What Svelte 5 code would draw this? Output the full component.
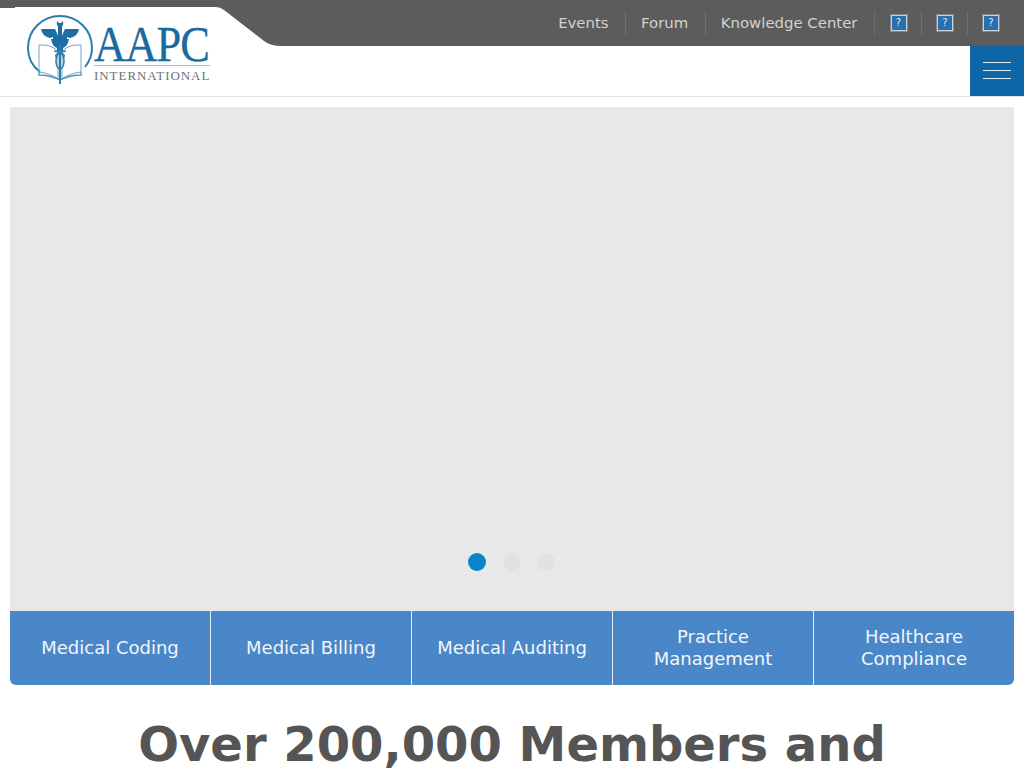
<script>
  const topLinks = ['Events', 'Forum', 'Knowledge Center'];
  const cats = ['Medical Coding', 'Medical Billing', 'Medical Auditing', 'Practice Management', 'Healthcare Compliance'];
</script>

<div class="page">
  <header class="header">
    <div class="topbar">
      <nav class="toplinks">
        {#each topLinks as l}
          <a href="#top" class="toplink">{l}</a>
        {/each}
      </nav>
      <div class="flags">
        {#each [0, 1, 2] as i}
          <span class="flag"><span class="broken">?</span></span>
        {/each}
      </div>
    </div>
    <div class="subbar">
      <button class="burger" aria-label="Menu"><i></i><i></i><i></i></button>
    </div>
    <div class="logotab">
      <svg class="tabshape" width="282" height="39" viewBox="0 0 282 39">
        <path d="M0 0H15V-1H216Q220 -1 224 2L264 33Q270 38 282 38V39H0Z" fill="#fff" />
      </svg>
      <div class="logo">
        <svg class="emblem" width="68" height="72" viewBox="0 0 68 72">
          <path d="M14 57C6 51 2 42 2 33C2 15 16 1 34 1C52 1 66 15 66 33C66 40 63 47 59 52" fill="none" stroke="#2b7dab" stroke-width="2"/>
          <path d="M13 30Q24 29 32 36V64Q24 58 13 57Z" fill="none" stroke="#6fa6c6" stroke-width="1"/>
          <path d="M55 30Q44 29 36 36V64Q44 58 55 57Z" fill="none" stroke="#6fa6c6" stroke-width="1"/>
          <path d="M13 57L13 60Q24 60 34 65Q44 60 55 60V57" fill="none" stroke="#4f93b8" stroke-width="1.3"/>
          <path d="M15 14H29Q31 18 32 21V12Q30 9 31 6L33 8H35L37 6Q38 9 36 12V21Q37 18 39 14H53Q52 21 44 23L41 22V24H27V22L24 23Q16 21 15 14Z" fill="#1c6ea4"/>
          <path d="M25 24H43Q42 31 37 33V36H31V33Q26 31 25 24Z" fill="#1c6ea4"/>
          <path d="M33 30H35V69H33Z" fill="#2b7dab"/>
          <ellipse cx="34" cy="46" rx="4" ry="8" fill="none" stroke="#2b7dab" stroke-width="1.5"/>
          <path d="M28 36Q40 38 38 42M40 36Q28 38 30 42" fill="none" stroke="#2b7dab" stroke-width="1.3"/>
        </svg>
        <div class="wordmark">
          <div class="aapc">AAPC</div>
          <div class="intl">INTERNATIONAL</div>
        </div>
      </div>
    </div>
  </header>

  <main class="content">
    <section class="slider">
      <div class="dots">
        <span class="dot active"></span>
        <span class="dot"></span>
        <span class="dot"></span>
      </div>
    </section>
    <ul class="cats">
      {#each cats as c}
        <li class="cat">{c}</li>
      {/each}
    </ul>
    <h1 class="headline">Over 200,000 Members and</h1>
  </main>
</div>

<style>
  :global(body) {
    margin: 0;
    background: #fff;
    overflow: hidden;
  }
  .page {
    height: 768px;
    overflow: hidden;
    font-family: "DejaVu Sans", sans-serif;
  }
  .header {
    position: relative;
    height: 96px;
    border-bottom: 1px solid #e4e4e4;
  }
  .topbar {
    height: 46px;
    background: #5c5c5c;
    display: flex;
    justify-content: flex-end;
    align-items: flex-start;
    padding-right: 11px;
  }
  .toplinks {
    display: flex;
    padding-top: 11px;
  }
  .toplink {
    color: #d2d2d2;
    font-size: 14.9px;
    line-height: 25px;
    height: 24px;
    padding: 0 16.5px 0 15px;
    text-decoration: none;
    border-left: 1px solid #6f6f6f;
  }
  .toplink:first-child {
    border-left: 0;
  }
  .flags {
    display: flex;
    padding-top: 11px;
  }
  .flag {
    width: 46px;
    height: 24px;
    box-sizing: border-box;
    border-left: 1px solid #6f6f6f;
    display: flex;
    justify-content: center;
    align-items: center;
    padding-left: 1px;
  }
  .flag:first-child {
    width: 47px;
  }
  .broken {
    width: 16px;
    height: 16px;
    box-sizing: border-box;
    background: #2a6fae;
    border: 1px solid #c9d3dc;
    outline: 1px solid #868686;
    color: #dfe9f2;
    font-size: 10px;
    line-height: 14px;
    text-align: center;
  }
  .subbar {
    height: 50px;
    display: flex;
    justify-content: flex-end;
  }
  .burger {
    width: 54px;
    height: 50px;
    padding: 0 0 2px;
    border: 0;
    background: #0e66a6;
    display: flex;
    flex-direction: column;
    align-items: center;
    justify-content: center;
    gap: 7px;
  }
  .burger i {
    display: block;
    width: 28px;
    height: 1px;
    background: #dff0fa;
  }
  .logotab {
    position: absolute;
    left: 0;
    top: 8px;
    width: 282px;
    height: 70px;
  }
  .tabshape {
    position: absolute;
    left: 0;
    top: 0;
    overflow: visible;
  }
  .logo {
    position: absolute;
    left: 26px;
    top: 7px;
    display: flex;
  }
  .wordmark {
    padding-top: 9px;
    width: 116px;
  }
  .aapc {
    font-family: "Liberation Serif", serif;
    font-size: 50px;
    line-height: 41px;
    letter-spacing: -1px;
    color: #1a6aa0;
    -webkit-text-stroke: 0.3px #1a6aa0;
    white-space: nowrap;
    transform: scaleX(0.89);
    transform-origin: left top;
  }
  .intl {
    font-family: "Liberation Serif", serif;
    font-size: 13px;
    line-height: 14px;
    letter-spacing: 0.95px;
    color: #6d7478;
    border-top: 1px solid #b9bcbe;
    padding-top: 3px;
    white-space: nowrap;
  }
  .content {
    padding: 10px 10px 0;
  }
  .slider {
    height: 504px;
    background: #e8e8e8;
    position: relative;
    border-radius: 2px 2px 0 0;
  }
  .dots {
    position: absolute;
    left: 458px;
    top: 446px;
    display: flex;
    gap: 16.5px;
  }
  .dot {
    width: 18px;
    height: 18px;
    border-radius: 50%;
    background: #e2e2e2;
  }
  .dot.active {
    background: #0a86c8;
  }
  .cats {
    list-style: none;
    margin: 0;
    padding: 0;
    display: grid;
    grid-template-columns: repeat(4, 201px) 1fr;
    height: 74px;
    background: #4a87c9;
    border-radius: 0 0 6px 6px;
    overflow: hidden;
  }
  .cat {
    display: flex;
    align-items: center;
    justify-content: center;
    text-align: center;
    color: #f2f6fb;
    font-size: 18px;
    line-height: 22px;
    padding: 0 20px;
    border-right: 1px solid #e4edf6;
  }
  .cat:last-child {
    border-right: 0;
  }
  .headline {
    margin: 33px 0 0;
    text-align: center;
    color: #555;
    font-size: 48px;
    line-height: 52px;
    font-weight: bold;
    white-space: nowrap;
  }
</style>
